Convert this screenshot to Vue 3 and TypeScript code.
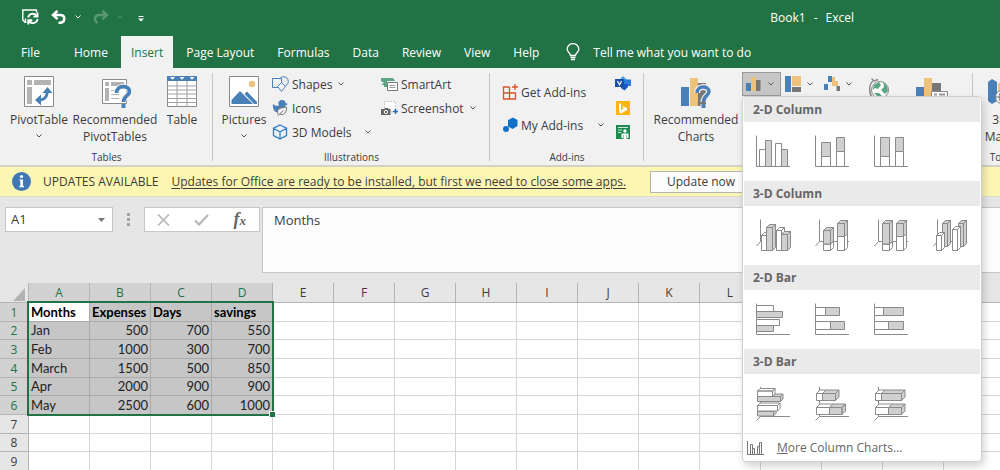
<script setup lang="ts">
import { ref } from 'vue'

interface Shape {
  d: string
  fill: string
}

interface MenuSection {
  title: string
  items: { name: string; shapes: Shape[] }[]
}

const GRAY = '#d0d0d0'
const WHITE = '#ffffff'

const line = (d: string): Shape => ({ d, fill: 'none' })

const box = (x: number, y: number, w: number, h: number, fill: string): Shape => ({
  d: `M${x} ${y}h${w}v${h}h${-w}z`,
  fill,
})

/* A box with a top face and a right-hand side face */
const solid = (x: number, y: number, w: number, h: number, fill: string, depth = 3): Shape => ({
  d:
    `M${x} ${y}h${w}v${h}h${-w}z` +
    `M${x} ${y}l${depth} ${-depth}h${w}l${-depth} ${depth}z` +
    `M${x + w} ${y}l${depth} ${-depth}v${h}l${-depth} ${depth}z`,
  fill,
})

const flatAxis = line('M.5 .5V31.5H34')
const deepAxis = line('M4.5 .5V22.5H34M4.5 22.5L.5 27')
const barAxis = line('M4.5 0V29.5H34M4.5 29.5L.5 33.5')

const sections: MenuSection[] = [
  {
    title: '2-D Column',
    items: [
      {
        name: 'Clustered Column',
        shapes: [flatAxis, box(3.5, 14.5, 6, 17, WHITE), box(9.5, 5.5, 6, 26, GRAY), box(19.5, 8.5, 6, 23, WHITE), box(25.5, 14.5, 6, 17, GRAY)],
      },
      {
        name: 'Stacked Column',
        shapes: [flatAxis, box(6.5, 7.5, 9, 14, GRAY), box(6.5, 21.5, 9, 10, WHITE), box(21.5, 2.5, 8, 14, GRAY), box(21.5, 16.5, 8, 15, WHITE)],
      },
      {
        name: '100% Stacked Column',
        shapes: [flatAxis, box(6.5, 2.5, 9, 19, GRAY), box(6.5, 21.5, 9, 10, WHITE), box(21.5, 2.5, 8, 14, GRAY), box(21.5, 16.5, 8, 15, WHITE)],
      },
    ],
  },
  {
    title: '3-D Column',
    items: [
      {
        name: '3-D Clustered Column',
        shapes: [deepAxis, solid(5.5, 16.5, 5, 15, WHITE), solid(10.5, 8.5, 6, 23, GRAY), solid(20.5, 11.5, 5, 20, WHITE), solid(25.5, 15.5, 6, 16, GRAY)],
      },
      {
        name: '3-D Stacked Column',
        shapes: [deepAxis, solid(8.5, 25, 7, 6.5, WHITE), solid(8.5, 11.5, 7, 13.5, GRAY), solid(22.5, 17.5, 7, 14, WHITE), solid(22.5, 4.5, 7, 13, GRAY)],
      },
      {
        name: '3-D 100% Stacked Column',
        shapes: [deepAxis, solid(8.5, 25, 7, 6.5, WHITE), solid(8.5, 4.5, 7, 20.5, GRAY), solid(22.5, 17.5, 7, 14, WHITE), solid(22.5, 4.5, 7, 13, GRAY)],
      },
      {
        name: '3-D Column',
        shapes: [deepAxis, solid(9.5, 4.5, 5, 23, GRAY), solid(3.5, 16.5, 5, 15, WHITE), solid(25.5, 4.5, 5, 23, GRAY), solid(19.5, 10.5, 5, 21, WHITE)],
      },
    ],
  },
  {
    title: '2-D Bar',
    items: [
      {
        name: 'Clustered Bar',
        shapes: [flatAxis, box(0.5, 2.5, 17, 6, WHITE), box(0.5, 8.5, 26, 6, GRAY), box(0.5, 16.5, 23, 6, WHITE), box(0.5, 22.5, 17, 6, GRAY)],
      },
      {
        name: 'Stacked Bar',
        shapes: [flatAxis, box(0.5, 4.5, 10, 8, WHITE), box(10.5, 4.5, 14, 8, GRAY), box(0.5, 18.5, 15, 8, WHITE), box(15.5, 18.5, 14, 8, GRAY)],
      },
      {
        name: '100% Stacked Bar',
        shapes: [flatAxis, box(0.5, 4.5, 9, 8, WHITE), box(9.5, 4.5, 20, 8, GRAY), box(0.5, 18.5, 14, 8, WHITE), box(14.5, 18.5, 15, 8, GRAY)],
      },
    ],
  },
  {
    title: '3-D Bar',
    items: [
      {
        name: '3-D Clustered Bar',
        shapes: [barAxis, solid(1.5, 9.5, 23, 5, GRAY, 2.5), solid(1.5, 4, 15, 5.5, WHITE, 2.5), solid(1.5, 24, 16, 5, GRAY, 2.5), solid(1.5, 18.5, 20, 5.5, WHITE, 2.5)],
      },
      {
        name: '3-D Stacked Bar',
        shapes: [barAxis, solid(1.5, 6.5, 6, 7, WHITE, 3.5), solid(7.5, 6.5, 13, 7, GRAY, 3.5), solid(1.5, 20.5, 13, 7, WHITE, 3.5), solid(14.5, 20.5, 12.5, 7, GRAY, 3.5)],
      },
      {
        name: '3-D 100% Stacked Bar',
        shapes: [barAxis, solid(1.5, 6.5, 6, 7, WHITE, 3.5), solid(7.5, 6.5, 20, 7, GRAY, 3.5), solid(1.5, 20.5, 13, 7, WHITE, 3.5), solid(14.5, 20.5, 13, 7, GRAY, 3.5)],
      },
    ],
  },
]

const tabs = ['File', 'Home', 'Insert', 'Page Layout', 'Formulas', 'Data', 'Review', 'View', 'Help']
const activeTab = ref('Insert')
const menuOpen = ref(true)
const search = ref('Tell me what you want to do')
const cellName = ref('A1')
const formula = ref('Months')

const columns = 'ABCDEFGHIJKLMNOP'.split('')
const data: (string | number)[][] = [
  ['Months', 'Expenses', 'Days', 'savings'],
  ['Jan', 500, 700, 550],
  ['Feb', 1000, 300, 700],
  ['March', 1500, 500, 850],
  ['Apr', 2000, 900, 900],
  ['May', 2500, 600, 1000],
]
const rowCount = 9
const selected = (row: number, col: number) => row <= data.length && col < data[0].length
const cell = (row: number, col: number) => data[row - 1]?.[col] ?? ''
</script>

<template>
  <div class="app">
    <header class="titlebar">
      <div class="quick">
        <button class="plain q-save" aria-label="Save">
          <svg width="17" height="16" viewBox="0 0 17 16" fill="none" stroke="#fff" stroke-width="1.4">
            <path d="M4.500 13.300H3L.8 11V1H14.500V3.500M3.500 13V9.500" />
            <path d="M6.200 8.500A4.600 4.600 0 0 1 14.300 6.500M15.500 3.500V7.500H11.500" stroke-width="1.900" />
            <path d="M15.600 10A4.600 4.600 0 0 1 7.400 12.300M6.300 15.500V11.300H10.300" stroke-width="1.900" />
          </svg>
        </button>
        <button class="plain q-undo" aria-label="Undo">
          <svg width="16" height="14" viewBox="0 0 16 14" fill="none" stroke="#fff" stroke-width="2.500">
            <path d="M6.500 .8L2 5L6.500 9.200M2 5H10A3.900 3.900 0 0 1 10 12.700H7.500" />
          </svg>
        </button>
        <button class="plain q-chev" aria-label="Undo list">
          <svg width="6" height="4" viewBox="0 0 6 4" fill="none" stroke="#fff"><path d="M.5 .5L3 3L5.500 .5" /></svg>
        </button>
        <button class="plain q-undo faded" aria-label="Redo">
          <svg width="16" height="14" viewBox="0 0 16 14" fill="none" stroke="#fff" stroke-width="2.500">
            <path d="M9.500 .8L14 5L9.500 9.200M14 5H6A3.900 3.900 0 0 0 3 11.500L4.500 13" />
          </svg>
        </button>
        <button class="plain q-chev faded" aria-label="Redo list">
          <svg width="6" height="4" viewBox="0 0 6 4" fill="none" stroke="#fff"><path d="M.5 .5L3 3L5.500 .5" /></svg>
        </button>
        <button class="plain q-more" aria-label="Customize toolbar">
          <svg width="6" height="6" viewBox="0 0 6 6"><path d="M.5 0H5.500V1H.5zM0 2.500H6L3 5.500z" fill="#fff" /></svg>
        </button>
      </div>
      <div class="doc"><span>Book1</span><span>-</span><span>Excel</span></div>
    </header>

    <nav class="tabs">
      <button
        v-for="tab in tabs"
        :key="tab"
        class="tab"
        :class="{ active: tab === activeTab, file: tab === 'File' }"
        @click="activeTab = tab"
      >{{ tab }}</button>
      <label class="tell">
        <svg width="14" height="18" viewBox="0 0 14 18" fill="none" stroke="#fff" stroke-width="1.3">
          <path d="M4.500 12.500C4.500 10 1.200 9.500 1.200 6.200A5.700 5.500 0 0 1 12.800 6.200C12.800 9.500 9.500 10 9.500 12.500zM4.500 14.500H9.500M5 16.500H9" />
        </svg>
        <input v-model="search" aria-label="Tell me what you want to do" />
      </label>
    </nav>

    <section class="ribbon">
      <div class="group g-tables">
        <div class="body">
          <button class="big b-pivot">
            <svg width="32" height="32" viewBox="0 0 32 32">
              <path d="M1.500 .5H30.500V30.500H1.500z" fill="#fff" stroke="#8a8a8a" />
              <path d="M4 4H9V9H4zM11 4H28V9H11zM4 11H9V28H4z" fill="#b3b3b3" />
              <path d="M15 24C21 24.500 24 21 24.500 15" fill="none" stroke="#4a80b8" stroke-width="3" />
              <path d="M18 18.500V29.500L12 24zM19.500 17L24.500 11L29.500 17z" fill="#4a80b8" />
            </svg>
            <span>PivotTable</span>
            <svg class="chev" width="6" height="4" viewBox="0 0 6 4"><path d="M.5 .5L3 3L5.500 .5" /></svg>
          </button>
          <button class="big b-rec">
            <svg width="32" height="32" viewBox="0 0 32 32">
              <path d="M3.500 3.500H27.500V27.500H3.500z" fill="#fff" stroke="#8a8a8a" />
              <path d="M6 6H10V10H6zM12 6H25V10H12zM6 12H10V25H6z" fill="#b3b3b3" />
              <path d="M12 14.500H18M12 18.500H20M12 22.500H20" stroke="#b3b3b3" />
              <path d="M17.500 17C17.500 8.500 30.500 9 30.500 15.500C30.500 20 24.500 19.500 24.500 26" fill="none" stroke="#f1f1f1" stroke-width="5.500" />
              <path d="M17.500 17C17.500 8.500 30.500 9 30.500 15.500C30.500 20 24.500 19.500 24.500 26" fill="none" stroke="#4a80b8" stroke-width="3.600" />
              <path d="M22.500 28H26.500V32H22.500z" fill="#4a80b8" />
            </svg>
            <span>Recommended<br />PivotTables</span>
          </button>
          <button class="big b-table">
            <svg width="32" height="32" viewBox="0 0 32 32">
              <path d="M1.500 .5H30.500V30.500H1.500z" fill="#fff" stroke="#8a8a8a" />
              <path d="M1.500 10H30.500M1.500 14H30.500M1.500 18H30.500M1.500 22.500H30.500M1.500 26.500H30.500M11 5V30.500M21 5V30.500" stroke="#a0a0a0" />
              <path d="M1 0H31V5H1z" fill="#4a80b8" />
              <path d="M4 1H9L6.500 3.800zM13.500 1H18.500L16 3.800zM23.500 1H28.500L26 3.800z" fill="#fff" />
            </svg>
            <span>Table</span>
          </button>
        </div>
        <h2>Tables</h2>
      </div>

      <div class="group g-illus">
        <div class="body">
          <button class="big b-pics">
            <svg width="32" height="32" viewBox="0 0 32 32">
              <path d="M1.500 .5H30.500V30.500H1.500z" fill="#fff" stroke="#8a8a8a" />
              <circle cx="24" cy="8" r="3.200" fill="#ecc27c" />
              <path d="M3.500 28V24L12 15L25 28zM16.500 18L19 15.500L29 26V28H26z" fill="#4a80b8" />
            </svg>
            <span>Pictures</span>
            <svg class="chev" width="6" height="4" viewBox="0 0 6 4"><path d="M.5 .5L3 3L5.500 .5" /></svg>
          </button>
          <div class="stack c-first">
            <button class="small">
              <svg width="17" height="16" viewBox="0 0 17 16" fill="#f1f1f1" stroke="#4a80b8">
                <circle cx="11.500" cy="5.500" r="4.800" />
                <path d="M.5 2.500H9.500V11.500H.5z" />
                <path d="M9.500 6.500L13.500 10.500L9.500 15.500L5.500 10.500z" />
              </svg>
              <span>Shapes</span>
              <svg class="chev" width="6" height="4" viewBox="0 0 6 4"><path d="M.5 .5L3 3L5.500 .5" /></svg>
            </button>
            <button class="small">
              <svg width="17" height="16" viewBox="0 0 17 16">
                <path d="M1 4C3 6 6 6 7 5.500C5.500 2.500 7 0 10 0C12 0 13.500 1.300 13.500 3L16 4L13.500 5.500C13.500 8 10 8.500 8 10C6 12 6 13 4 12C1.500 11 .5 7 1 4z" fill="#4a80b8" />
                <path d="M6 14C4 9 8 8 14.500 7C15 12 12 16 7.500 14L11.500 10.500M7.500 14L5.500 16" fill="#f1f1f1" stroke="#777" />
              </svg>
              <span>Icons</span>
            </button>
            <button class="small models">
              <svg width="17" height="16" viewBox="0 0 17 16" fill="none" stroke="#2e7cc4" stroke-width="1.300">
                <path d="M8 1L14.500 4.200V11.500L8 15L1.500 11.500V4.200zM1.500 4.200L8 8L14.500 4.200M8 8V15" />
              </svg>
              <span>3D Models</span>
              <svg class="chev" width="6" height="4" viewBox="0 0 6 4"><path d="M.5 .5L3 3L5.500 .5" /></svg>
            </button>
          </div>
          <div class="stack">
            <button class="small">
              <svg width="17" height="16" viewBox="0 0 17 16">
                <path d="M0 2H12L14 5H6V11H3V9H0L3 7L0 5z" fill="#5ba583" />
                <path d="M6.500 6.500H16.500V14.500H6.500z" fill="#fff" stroke="#777" />
                <path d="M8.500 9.500H14.500M8.500 11.500H14.500" stroke="#999" />
              </svg>
              <span>SmartArt</span>
            </button>
            <button class="small">
              <svg width="17" height="16" viewBox="0 0 17 16">
                <path d="M3.500 1.500H14.500V11.500H3.500z" fill="#fff" stroke="#999" stroke-dasharray="1 2" />
                <path d="M0 9H3L4 8H7L8 9H9.500V15H0z" fill="#666" />
                <circle cx="5" cy="12" r="1.700" fill="#666" stroke="#fff" />
                <path d="M12 11.500H17M14.500 9V14" stroke="#2e6db4" stroke-width="1.600" />
              </svg>
              <span>Screenshot</span>
              <svg class="chev" width="6" height="4" viewBox="0 0 6 4"><path d="M.5 .5L3 3L5.500 .5" /></svg>
            </button>
          </div>
        </div>
        <h2>Illustrations</h2>
      </div>

      <div class="group g-addins">
        <div class="body">
          <div class="stack c-addins">
            <button class="small">
              <svg width="16" height="16" viewBox="0 0 16 16" fill="none" stroke="#d8532b" stroke-width="1.300">
                <path d="M7.500 3H1.500V15H13.500V9H1.500M7.500 3V15M13 0V6M10 3H16" />
              </svg>
              <span>Get Add-ins</span>
            </button>
            <button class="small mine">
              <svg width="16" height="16" viewBox="0 0 16 16" fill="#0f72c8">
                <path d="M6 3L11 .5L15.500 3V9L10.500 12L6 9.500z" /><circle cx="4" cy="12" r="3" />
              </svg>
              <span>My Add-ins</span>
              <svg class="chev" width="6" height="4" viewBox="0 0 6 4"><path d="M.5 .5L3 3L5.500 .5" /></svg>
            </button>
          </div>
          <div class="stack c-apps">
            <button class="small" aria-label="Visio Data Visualizer">
              <svg width="16" height="16" viewBox="0 0 16 16">
                <path d="M8 0L12 4L8 8L4 4z" fill="#41a5ee" /><path d="M8 3.500H16V10H8z" fill="#2b7cd3" />
                <path d="M6 8H13V11L9.500 14.500L6 12z" fill="#185abd" /><path d="M0 3H9V11H0z" fill="#1b4fa8" />
                <path d="M2.500 5L4.500 9L6.500 5" fill="none" stroke="#fff" stroke-width="1.200" />
              </svg>
            </button>
            <button class="small" aria-label="Bing Maps">
              <svg width="16" height="16" viewBox="0 0 16 16">
                <path d="M1 1H15V15H1z" fill="#fbb412" /><path d="M4 3L6 4V10L8.500 8.800L7 6L12 8V10L6 13.500L4 12z" fill="#fff" />
              </svg>
            </button>
            <button class="small" aria-label="People Graph">
              <svg width="16" height="16" viewBox="0 0 16 16">
                <path d="M1 1H15V15H1z" fill="#1e8a50" /><path d="M3 3.500H13M3 6H7M3 8.500H6" stroke="#cfe8da" />
                <circle cx="10" cy="7" r="1.700" fill="#fff" /><path d="M6.500 9.500H13.500V14H12V11H11.500V15H8.500V11H8V14H6.500z" fill="#fff" />
              </svg>
            </button>
          </div>
        </div>
        <h2>Add-ins</h2>
      </div>

      <div class="group g-charts">
        <div class="body">
          <button class="big b-rec">
            <svg width="32" height="32" viewBox="0 0 32 32">
              <path d="M1 11H9V30H1z" fill="#4a80b8" /><path d="M10 2H18V30H10z" fill="#ecc27c" /><path d="M18 7H26V30H18z" fill="#777" />
              <path d="M17 17C17 9 29 9.500 29 15.500C29 20 23.500 19.500 23.500 26M23.500 28V32" fill="none" stroke="#f1f1f1" stroke-width="6" />
              <path d="M17 17C17 9 29 9.500 29 15.500C29 20 23.500 19.500 23.500 26" fill="none" stroke="#4a80b8" stroke-width="3.500" />
              <path d="M21.500 28H25.500V32H21.500z" fill="#4a80b8" />
            </svg>
            <span>Recommended<br />Charts</span>
          </button>
          <div class="picker">
            <div class="kinds">
              <button class="kind" :class="{ open: menuOpen }" aria-label="Column or bar chart" @click="menuOpen = !menuOpen">
                <svg width="16" height="16" viewBox="0 0 16 16"><path d="M0 7H5V15H0z" fill="#4a80b8" /><path d="M5 1H10V15H5z" fill="#ecc27c" /><path d="M10 4H14.500V15H10z" fill="#777" /></svg>
                <svg class="chev" width="6" height="4" viewBox="0 0 6 4"><path d="M.5 .5L3 3L5.500 .5" /></svg>
              </button>
              <button class="kind" aria-label="Hierarchy chart">
                <svg width="16" height="16" viewBox="0 0 16 16"><path d="M0 0H6V16H0z" fill="#4a80b8" /><path d="M7 0H16V10H7z" fill="#ecc27c" /><path d="M7 11H16V16H7z" fill="#777" /></svg>
                <svg class="chev" width="6" height="4" viewBox="0 0 6 4"><path d="M.5 .5L3 3L5.500 .5" /></svg>
              </button>
              <button class="kind" aria-label="Waterfall chart">
                <svg width="16" height="16" viewBox="0 0 16 16"><path d="M0 8H4V14H0zM4 0H8V6H4z" fill="#4a80b8" /><path d="M8 1H11V10H8zM11 5H14V10H11z" fill="#ecc27c" /><path d="M12.500 10H16V15H12.500z" fill="#777" /></svg>
                <svg class="chev" width="6" height="4" viewBox="0 0 6 4"><path d="M.5 .5L3 3L5.500 .5" /></svg>
              </button>
            </div>
            <div v-if="menuOpen" class="menu" role="menu">
              <section v-for="section in sections" :key="section.title">
                <h3>{{ section.title }}</h3>
                <div class="choices">
                  <button v-for="item in section.items" :key="item.name" class="choice" role="menuitem" :aria-label="item.name">
                    <svg width="35" height="34" viewBox="0 0 35 34" stroke="#8a8a8a">
                      <path v-for="(shape, i) in item.shapes" :key="i" :d="shape.d" :fill="shape.fill" />
                    </svg>
                  </button>
                </div>
              </section>
              <button class="more" role="menuitem">
                <svg width="17" height="16" viewBox="0 0 17 16" stroke="#777" fill="none">
                  <path d="M.5 1V14.500H17M3.500 14V4.500H5.500V14M5.500 8.500H7.500V14M10.500 14V6.500H12.500V14M12.500 14V2.500H14.500V14" />
                </svg>
                <span><u>M</u>ore Column Charts...</span>
              </button>
            </div>
          </div>
          <button class="big b-globe" aria-label="Maps">
            <svg width="28" height="32" viewBox="0 0 28 32">
              <circle cx="15" cy="14" r="8.500" fill="#fff" stroke="#888" />
              <path d="M9 9L14 6L16 9L13 13L10 12L7.500 14zM18 6L22 10L23 15L20 18L16 14L19 11zM9 17L14 17L17 20L14 22z" fill="#5ba583" />
              <path d="M8 5C3 9 4 18 8 23M6.500 2.500L9 5L13 3.500" fill="none" stroke="#888" stroke-width="1.400" />
            </svg>
          </button>
          <button class="big b-pchart" aria-label="PivotChart">
            <svg width="34" height="32" viewBox="0 0 34 32">
              <path d="M1 11H9V26H1z" fill="#4a80b8" /><path d="M9 2H17V26H9z" fill="#ecc27c" /><path d="M17 7H26V26H17z" fill="#777" />
              <path d="M16.500 15.500H32.500V28H16.500z" fill="#fff" stroke="#888" /><path d="M19 18.500H22M24 18.500H30" stroke="#999" stroke-width="2" />
            </svg>
          </button>
        </div>
      </div>

      <div class="group g-tours">
        <div class="body">
          <button class="big b-map">
            <svg width="32" height="32" viewBox="0 0 32 32">
              <path d="M4 6L8 3L13 6V25L8 28L4 25z" fill="#4a80b8" /><path d="M14 8L22 2V24H14z" fill="#ecc27c" />
              <circle cx="18" cy="21" r="6.500" fill="#fff" stroke="#777" /><path d="M11.500 21H24.500M18 14.500V27.500M18 14.500C14 18 14 24 18 27.500C22 24 22 18 18 14.500" fill="none" stroke="#777" />
            </svg>
            <span>3D<br />Maps</span>
          </button>
        </div>
        <h2>Tours</h2>
      </div>
    </section>

    <aside class="notice">
      <svg width="19" height="19" viewBox="0 0 19 19">
        <circle cx="9.500" cy="9.500" r="9.500" fill="#3f78b5" />
        <circle cx="9.500" cy="4.500" r="1.600" fill="#fff" /><path d="M7.500 7.500H11V14H12V15.300H7.300V14H8.300V8.800H7.500z" fill="#fff" />
      </svg>
      <strong>UPDATES AVAILABLE</strong>
      <a href="#updates">Updates for Office are ready to be installed, but first we need to close some apps.</a>
      <button>Update now</button>
    </aside>

    <section class="formula">
      <div class="name">
        <input v-model="cellName" aria-label="Name box" />
        <button class="plain" aria-label="Show names">
          <svg width="7" height="4" viewBox="0 0 7 4"><path d="M0 0H7L3.500 4z" fill="#777" /></svg>
        </button>
      </div>
      <svg class="dots" width="3" height="13" viewBox="0 0 3 13" fill="#a3a3a3"><path d="M0 0H3V3H0zM0 5H3V8H0zM0 10H3V13H0z" /></svg>
      <div class="tools">
        <button class="plain" aria-label="Cancel"><svg width="13" height="12" viewBox="0 0 13 12"><path d="M1 .5L12 11.500M12 .5L1 11.500" stroke="#b8b8b8" stroke-width="1.700" /></svg></button>
        <button class="plain" aria-label="Enter"><svg width="15" height="12" viewBox="0 0 15 12"><path d="M1 6.500L5 10.500L14 1" fill="none" stroke="#b8b8b8" stroke-width="2.300" /></svg></button>
        <button class="plain fx" aria-label="Insert function">f<sub>x</sub></button>
      </div>
      <textarea v-model="formula" aria-label="Formula bar"></textarea>
    </section>

    <main class="sheet">
      <table>
        <thead>
          <tr>
            <th class="corner"><svg width="12" height="13" viewBox="0 0 12 13"><path d="M12 0V13H0z" fill="#b2b2b2" /></svg></th>
            <th v-for="(name, c) in columns" :key="name" scope="col" :class="{ on: c < 4 }">{{ name }}</th>
          </tr>
        </thead>
        <tbody>
          <tr v-for="row in rowCount" :key="row">
            <th scope="row" :class="{ on: row <= 6 }">{{ row }}</th>
            <td
              v-for="(name, c) in columns"
              :key="name"
              :class="{ picked: selected(row, c), current: row === 1 && c === 0, head: row === 1, num: typeof cell(row, c) === 'number' }"
            >{{ cell(row, c) }}</td>
          </tr>
        </tbody>
      </table>
      <div class="selection"></div>
    </main>
  </div>
</template>

<style>
body {
  margin: 0;
  background: #fff;
}
</style>

<style scoped>
.app {
  height: 100vh;
  overflow: hidden;
  font-family: "Open Sans", "Noto Sans", sans-serif;
  font-size: 12px;
  line-height: 17px;
  color: #3c3c3c;
  background: #fff;
}
.app * {
  box-sizing: border-box;
}
button,
input,
textarea {
  margin: 0;
  padding: 0;
  border: 0;
  border-radius: 0;
  background: none;
  font: inherit;
  color: inherit;
  outline: none;
}
svg {
  display: block;
  flex: none;
}
h2,
h3 {
  margin: 0;
}
.chev {
  fill: none;
  stroke: #555;
}

.titlebar {
  display: flex;
  align-items: center;
  height: 36px;
  padding: 0 146px 2px 22px;
  background: #217346;
  color: #fff;
}
.quick {
  display: flex;
  align-items: center;
}
.q-undo {
  margin-left: 12px;
}
.q-chev {
  margin-left: 8px;
}
.q-more {
  margin: 4px 0 0 15px;
}
.faded {
  opacity: 0.25;
}
.doc {
  display: flex;
  gap: 8px;
  margin-left: auto;
}

.tabs {
  display: flex;
  gap: 3px;
  height: 32px;
  padding-left: 11px;
  background: #217346;
  color: #fff;
}
.tab {
  padding: 0 10px;
}
.tab.file {
  margin-right: 11px;
}
.tab.active {
  background: #f1f1f1;
  color: #217346;
}
.tell {
  display: flex;
  align-items: center;
  gap: 13px;
  flex: 1;
  margin-left: 14px;
}
.tell input {
  flex: 1;
  min-width: 0;
}

.ribbon {
  display: flex;
  height: 99px;
  background: #f1f1f1;
  border-bottom: 2px solid #d3d2c5;
}
.group {
  position: relative;
  display: flex;
  flex-direction: column;
  flex: none;
}
.group::after {
  content: "";
  position: absolute;
  right: 0;
  top: 5px;
  bottom: 4px;
  width: 1px;
  background: #c6c6c6;
}
.body {
  display: flex;
  height: 81px;
}
.group h2 {
  font-size: 10px;
  line-height: 16px;
  font-weight: 400;
  text-align: center;
}
.g-tables {
  width: 213px;
}
.g-tables .body {
  gap: 2px;
  padding-left: 8px;
}
.g-illus {
  width: 277px;
}
.g-illus .body {
  padding-left: 8px;
}
.g-addins {
  width: 154px;
}
.g-addins .body {
  padding-left: 12px;
}
.g-charts {
  width: 329px;
}
.g-charts .body {
  padding-left: 9px;
}
.g-tours {
  width: 60px;
}
.g-tours .body {
  padding-left: 11px;
}
.big {
  display: flex;
  flex-direction: column;
  align-items: center;
  flex: none;
  padding-top: 8px;
}
.big span {
  margin-top: 3px;
  white-space: nowrap;
}
.big .chev {
  margin-top: 6px;
}
.b-pivot {
  width: 62px;
}
.b-rec {
  width: 86px;
}
.b-table {
  width: 44px;
}
.b-pics {
  width: 46px;
}
.b-map {
  width: 32px;
}
.b-globe {
  width: 28px;
  margin-left: 6px;
}
.b-pchart {
  width: 34px;
  margin-left: 22px;
}
.stack {
  display: flex;
  flex-direction: column;
  padding-top: 4px;
}
.small {
  display: flex;
  align-items: center;
  gap: 3px;
  height: 24px;
  white-space: nowrap;
}
.small .chev {
  margin-left: 3px;
}
.c-first {
  width: 109px;
  margin-left: 5px;
}
.models .chev {
  margin-left: 10px;
}
.c-addins {
  width: 113px;
  padding-top: 12px;
  gap: 9px;
}
.mine .chev {
  margin-left: 12px;
}

.picker {
  position: relative;
  margin-left: 3px;
  padding-top: 4px;
}
.kinds {
  display: flex;
}
.kind {
  display: flex;
  align-items: center;
  gap: 6px;
  width: 39px;
  height: 24px;
  padding-left: 4px;
}
.kind.open {
  background: #c6c6c6;
  border: 1px solid #9a9a9a;
  padding-left: 3px;
}
.menu {
  position: absolute;
  z-index: 5;
  top: 28px;
  left: 0;
  width: 240px;
  padding: 0 1px;
  border: 1px solid #d0d0d0;
  border-radius: 4px;
  background: #fff;
  box-shadow: 2px 4px 8px rgba(0, 0, 0, 0.18);
  color: #666;
}
.menu h3 {
  height: 25px;
  padding-left: 9px;
  background: #eaeaea;
  font-size: 12px;
  line-height: 26px;
  font-weight: 700;
}
.choices {
  display: flex;
  align-items: flex-start;
  height: 59px;
}
.choice {
  width: 59px;
  padding: 13px 0 0 12px;
}
.choice svg {
  overflow: visible;
}
.more {
  display: flex;
  align-items: center;
  gap: 13px;
  width: 100%;
  height: 28px;
  padding-left: 3px;
  border-top: 1px solid #dfe3e6;
}

.notice {
  display: flex;
  align-items: center;
  height: 29px;
  padding-left: 12px;
  background: #fcf6b3;
  white-space: nowrap;
}
.notice strong {
  margin: 0 13px 0 12px;
  font-weight: 400;
}
.notice a {
  color: #3c3c3c;
  text-underline-offset: 2px;
}
.notice button {
  width: 102px;
  height: 22px;
  margin-left: 24px;
  border: 1px solid #b5b5b5;
  background: #fdfdfd;
}

.formula {
  display: flex;
  align-items: flex-start;
  height: 87px;
  padding: 10px 0 11px 5px;
  background: #e6e6e6;
  border-top: 1px solid #dcdcc8;
}
.name,
.tools {
  display: flex;
  align-items: center;
  height: 25px;
  border: 1px solid #c6c6c6;
  background: #fff;
}
.name {
  width: 108px;
  padding: 0 7px 0 5px;
  font-size: 13px;
}
.name input {
  flex: 1;
  min-width: 0;
}
.dots {
  margin: 6px 14px 0;
}
.tools {
  width: 116px;
  justify-content: space-between;
  padding: 0 13px 0 12px;
}
.fx {
  font-family: "Liberation Serif", serif;
  font-style: italic;
  font-weight: 700;
  font-size: 18px;
  color: #666;
}
.fx sub {
  font-size: 13px;
  vertical-align: baseline;
}
.formula textarea {
  flex: 1;
  height: 66px;
  margin-left: 2px;
  padding: 4px 11px;
  border: 1px solid #c6c6c6;
  border-right: 0;
  background: #fdfdfd;
  font-size: 13px;
  resize: none;
}

.sheet {
  position: relative;
}
table {
  width: 1005px;
  table-layout: fixed;
  border-collapse: separate;
  border-spacing: 0;
}
th,
td {
  height: 19px;
  padding: 0 2px;
  border: 0 solid #d6d6d6;
  border-width: 0 1px 1px 0;
  line-height: 17px;
  white-space: nowrap;
}
thead th {
  height: 20px;
}
tbody tr:nth-child(3n + 2) th,
tbody tr:nth-child(3n + 2) td {
  height: 18px;
}
th {
  padding: 0;
  background: #e6e6e6;
  border-color: #b4b4b4;
  font-weight: 400;
  font-size: 12px;
}
th.corner {
  width: 29px;
  padding: 3px 0 0 13px;
}
th.on {
  background: #d2d2d2;
  color: #217346;
}
td {
  font-family: Lato, "Open Sans", sans-serif;
  font-size: 13px;
  color: #222;
}
td.picked {
  background: #c6c6c6;
  border-color: #aaa;
}
td.current {
  background: #fff;
}
td.head {
  font-weight: 700;
  color: #000;
}
td.num {
  text-align: right;
}
.selection {
  position: absolute;
  top: 18px;
  left: 27px;
  width: 247px;
  height: 115px;
  border: 2px solid #217346;
  pointer-events: none;
}
.selection::after {
  content: "";
  position: absolute;
  right: -3px;
  bottom: -3px;
  width: 5px;
  height: 5px;
  background: #217346;
  border: 1px solid #fff;
  border-width: 1px 0 0 1px;
}
</style>
